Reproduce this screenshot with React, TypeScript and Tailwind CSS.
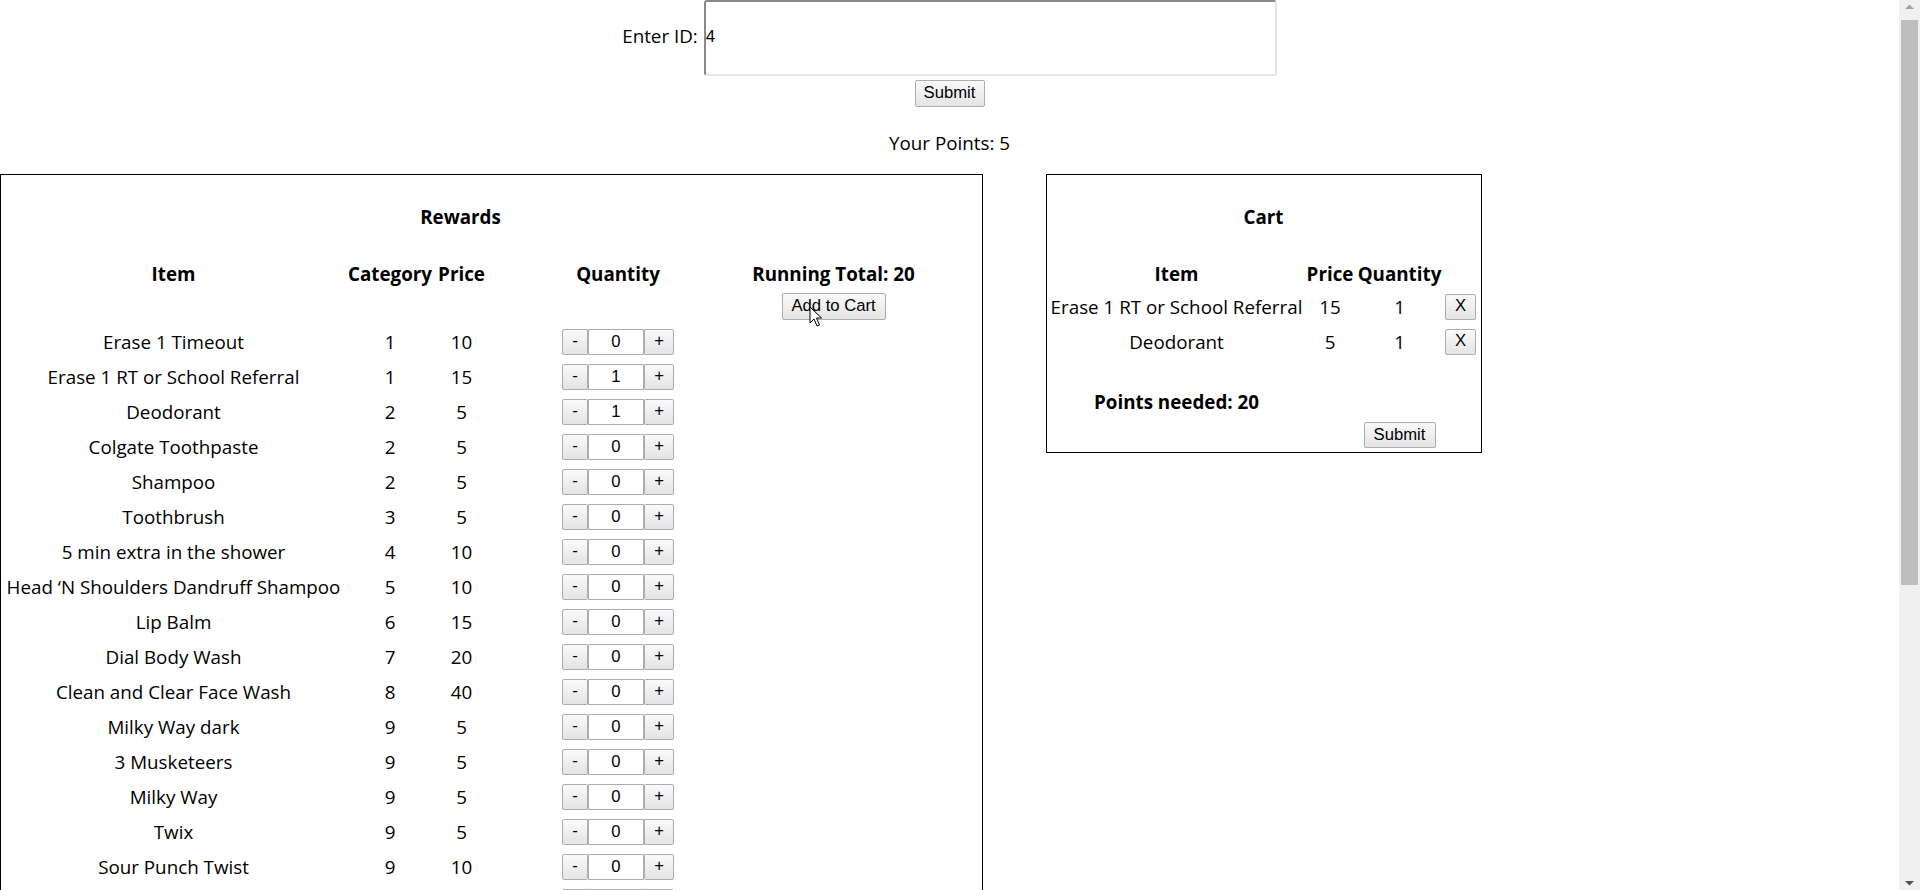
import React from "react";

type Item = { name: string; cat: number; price: number; qty: number };

const items: Item[] = [
  { name: "Erase 1 Timeout", cat: 1, price: 10, qty: 0 },
  { name: "Erase 1 RT or School Referral", cat: 1, price: 15, qty: 1 },
  { name: "Deodorant", cat: 2, price: 5, qty: 1 },
  { name: "Colgate Toothpaste", cat: 2, price: 5, qty: 0 },
  { name: "Shampoo", cat: 2, price: 5, qty: 0 },
  { name: "Toothbrush", cat: 3, price: 5, qty: 0 },
  { name: "5 min extra in the shower", cat: 4, price: 10, qty: 0 },
  { name: "Head \u2018N Shoulders Dandruff Shampoo", cat: 5, price: 10, qty: 0 },
  { name: "Lip Balm", cat: 6, price: 15, qty: 0 },
  { name: "Dial Body Wash", cat: 7, price: 20, qty: 0 },
  { name: "Clean and Clear Face Wash", cat: 8, price: 40, qty: 0 },
  { name: "Milky Way dark", cat: 9, price: 5, qty: 0 },
  { name: "3 Musketeers", cat: 9, price: 5, qty: 0 },
  { name: "Milky Way", cat: 9, price: 5, qty: 0 },
  { name: "Twix", cat: 9, price: 5, qty: 0 },
  { name: "Sour Punch Twist", cat: 9, price: 10, qty: 0 },
  { name: "Snickers", cat: 9, price: 5, qty: 0 },
  { name: "Kit Kat", cat: 9, price: 5, qty: 0 },
  { name: "Reese's Cups", cat: 9, price: 5, qty: 0 },
  { name: "Skittles", cat: 9, price: 5, qty: 0 },
  { name: "Starburst", cat: 9, price: 5, qty: 0 },
  { name: "Hot Cheetos", cat: 10, price: 10, qty: 0 },
  { name: "Doritos", cat: 10, price: 10, qty: 0 },
  { name: "Ramen Noodles", cat: 10, price: 10, qty: 0 },
  { name: "Gatorade", cat: 11, price: 15, qty: 0 },
  { name: "Extra Phone Call", cat: 12, price: 30, qty: 0 },
  { name: "Late Bedtime", cat: 13, price: 40, qty: 0 },
  { name: "Movie Night", cat: 14, price: 50, qty: 0 },
  { name: "Choose Activity", cat: 15, price: 60, qty: 0 },
];

const cart = [
  { name: "Erase 1 RT or School Referral", price: 15, qty: 1 },
  { name: "Deodorant", price: 5, qty: 1 },
];

const btn =
  "border border-[#adadad] bg-linear-to-b from-[#fafafa] to-[#e4e4e4] text-black font-['Liberation_Sans',Arial,sans-serif] text-[16.67px] leading-none rounded-[2px] flex items-center justify-center";

function Cursor() {
  return (
    <svg
      className="absolute left-[27px] top-[13px] w-[13px] h-[21px] pointer-events-none"
      viewBox="0 0 13 21"
    >
      <path
        d="M1 1 L1 17 L5 13 L8 20 L10.5 19 L7.5 12 L12.5 12 Z"
        fill="#ffffff"
        stroke="#000000"
        strokeWidth="1"
        strokeLinejoin="miter"
      />
    </svg>
  );
}

function Scrollbar() {
  return (
    <div className="fixed right-0 top-0 w-[21px] h-[890px] bg-[#f0f0f0] flex flex-col items-center">
      <svg className="w-[21px] h-[17px] shrink-0" viewBox="0 0 21 17">
        <path d="M6 9 L10.5 4.5 L15 9 Z" fill="#a3a3a3" />
      </svg>
      <div className="mt-[3px] w-[17px] h-[565px] bg-[#bebebe]" />
      <div className="flex-1" />
      <svg className="w-[21px] h-[17px] shrink-0" viewBox="0 0 21 17">
        <path d="M6 8 L10.5 12.5 L15 8 Z" fill="#505050" />
      </svg>
    </div>
  );
}

function QtyControl({ qty }: { qty: number }) {
  return (
    <div className="flex h-[26px]">
      <button className={btn + " w-[26px] h-[26px]"}>-</button>
      <input
        readOnly
        value={qty}
        className="w-[56px] h-[26px] border border-[#adadad] bg-white text-center text-black font-['Liberation_Sans',Arial,sans-serif] text-[16.67px] outline-none"
      />
      <button className={btn + " w-[30px] h-[26px]"}>+</button>
    </div>
  );
}

export default function App() {
  return (
    <div className="h-[890px] overflow-hidden bg-white text-black font-['Open_Sans',sans-serif] text-[18.8px]">
      <div className="w-[1899px]">
        <div className="flex flex-col items-center">
          <div className="flex items-center h-[76px]">
            <span className="mr-[6px] mb-[3px] leading-[27px]">Enter ID:</span>
            <input
              readOnly
              value="4"
              className="w-[573px] h-[76px] rounded-[3px] border-2 border-t-[#8a8a8a] border-l-[#8a8a8a] border-r-[#e6e6e6] border-b-[#e6e6e6] px-[0px] pb-[2px] text-[16.67px] font-['Liberation_Sans',Arial,sans-serif] text-black outline-none"
            />
          </div>
          <button className={btn + " mt-[4px] w-[70px] h-[27px]"}>Submit</button>
          <div className="mt-[23px] h-[27px] leading-[27px]">Your Points: 5</div>
        </div>

        <div className="flex items-start gap-[63px] mt-[17px]">
          <div className="w-[983px] border border-black pl-[2px] pt-[29px] pb-[8px]">
            <div className="w-[915px] h-[27px] leading-[27px] text-center font-bold">
              Rewards
            </div>
            <div className="mt-[28px] grid grid-cols-[341px_92px_51px_262px_169px] h-[30px] items-center text-center font-bold">
              <div>Item</div>
              <div>Category</div>
              <div>Price</div>
              <div>Quantity</div>
              <div className="whitespace-nowrap">Running Total: 20</div>
            </div>
            <div className="grid grid-cols-[341px_92px_51px_262px_169px] h-[35px]">
              <div />
              <div />
              <div />
              <div />
              <div className="flex justify-center pt-[4px]">
                <div className="relative">
                  <button className={btn + " w-[104px] h-[27px]"}>Add to Cart</button>
                  <Cursor />
                </div>
              </div>
            </div>
            {items.map((it, i) => (
              <div
                key={i}
                className="grid grid-cols-[341px_92px_51px_262px_169px] h-[35px] items-center text-center leading-[27px]"
              >
                <div className="whitespace-nowrap pt-[1px]">{it.name}</div>
                <div className="pt-[1px]">{it.cat}</div>
                <div className="pt-[1px]">{it.price}</div>
                <div className="flex justify-center">
                  <QtyControl qty={it.qty} />
                </div>
                <div />
              </div>
            ))}
          </div>

          <div className="w-[436px] h-[279px] border border-black pl-[2px] pt-[29px]">
            <div className="w-[429px] h-[27px] leading-[27px] text-center font-bold">Cart</div>
            <div className="mt-[28px] grid grid-cols-[255px_52px_87px_35px] h-[30px] items-center text-center font-bold">
              <div>Item</div>
              <div>Price</div>
              <div>Quantity</div>
              <div />
            </div>
            {cart.map((c, i) => (
              <div
                key={i}
                className="grid grid-cols-[255px_52px_87px_35px] h-[35px] items-center text-center leading-[27px]"
              >
                <div className="whitespace-nowrap pt-[1px]">{c.name}</div>
                <div className="pt-[1px]">{c.price}</div>
                <div className="pt-[1px]">{c.qty}</div>
                <div className="flex justify-center">
                  <button className={btn + " w-[31px] h-[26px]"}>X</button>
                </div>
              </div>
            ))}
            <div className="mt-[26px] grid grid-cols-[255px_52px_87px_35px] h-[35px] items-center text-center">
              <div className="font-bold whitespace-nowrap">Points needed: 20</div>
              <div />
              <div />
              <div />
            </div>
            <div className="grid grid-cols-[255px_52px_87px_35px] pt-[2px]">
              <div />
              <div />
              <div className="flex justify-center">
                <button className={btn + " w-[72px] h-[26px]"}>Submit</button>
              </div>
              <div />
            </div>
          </div>
        </div>
      </div>
      <Scrollbar />
    </div>
  );
}
